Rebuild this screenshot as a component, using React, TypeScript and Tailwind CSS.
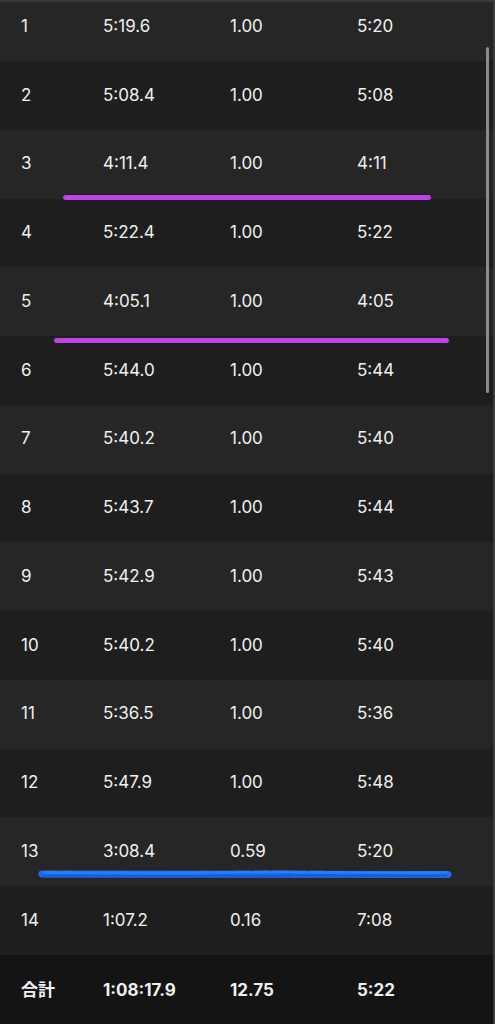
import React from 'react';

const ROWS: [string, string, string, string][] = [
  ['1', '5:19.6', '1.00', '5:20'],
  ['2', '5:08.4', '1.00', '5:08'],
  ['3', '4:11.4', '1.00', '4:11'],
  ['4', '5:22.4', '1.00', '5:22'],
  ['5', '4:05.1', '1.00', '4:05'],
  ['6', '5:44.0', '1.00', '5:44'],
  ['7', '5:40.2', '1.00', '5:40'],
  ['8', '5:43.7', '1.00', '5:44'],
  ['9', '5:42.9', '1.00', '5:43'],
  ['10', '5:40.2', '1.00', '5:40'],
  ['11', '5:36.5', '1.00', '5:36'],
  ['12', '5:47.9', '1.00', '5:48'],
  ['13', '3:08.4', '0.59', '5:20'],
  ['14', '1:07.2', '0.16', '7:08'],
];

const Row: React.FC<{ cells: string[]; className: string }> = ({ cells, className }) => (
  <div className={`flex items-center text-[17px] ${className}`}>
    <div className="w-[103px] pl-[21px]">{cells[0]}</div>
    <div className="w-[127px]">{cells[1]}</div>
    <div className="w-[127px]">{cells[2]}</div>
    <div className="flex-1">{cells[3]}</div>
  </div>
);

export default function App() {
  return (
    <div
      className="relative w-[495px] h-[1024px] overflow-hidden bg-[#1f1f1f] text-[#f0f0f0] border-t-[2px] border-[#3a3a3a]"
      style={{ fontFamily: 'Inter, "Noto Sans CJK JP", sans-serif' }}
    >
      {ROWS.map((r, i) => (
        <Row
          key={r[0]}
          cells={r}
          className={`${i === 0 ? 'h-[59px] pb-[9px]' : 'h-[68.75px]'} ${i % 2 === 0 ? 'bg-[#262626]' : 'bg-[#1e1e1e]'}`}
        />
      ))}
      <Row cells={['合計', '1:08:17.9', '12.75', '5:22']} className="h-[72px] bg-[#141414] font-bold" />

      {/* right edge + scrollbar */}
      <div className="absolute right-0 top-0 bottom-0 w-[2px] bg-[#3a3a3a]" />
      <div className="absolute right-[6px] top-[45px] h-[346px] w-[3px] rounded-full bg-[#8c8c8c]" />

      {/* hand-drawn annotations */}
      <div className="absolute left-[62px] top-[192px] w-[370px] h-[7px] rounded-full bg-[#bb47e3] border border-[#2a1530]" />
      <div className="absolute left-[53px] top-[335px] w-[397px] h-[7px] rounded-full bg-[#bb47e3] border border-[#2a1530]" />
      <svg className="absolute left-[38px] top-[865px]" width="414" height="14" viewBox="0 0 414 14">
        <path d="M4 7 L410 7.5" stroke="#1c6cf0" strokeWidth="7" strokeLinecap="round" fill="none" />
        <path d="M6 5.5 L120 6 L240 5 L360 6 L408 5.5" stroke="#2b7bff" strokeWidth="3" strokeLinecap="round" fill="none" strokeDasharray="9 2 5 3" />
        <path d="M6 9 L140 9.5 L260 8.5 L408 9" stroke="#1560d8" strokeWidth="3" strokeLinecap="round" fill="none" strokeDasharray="6 3 11 2" />
      </svg>
    </div>
  );
}
